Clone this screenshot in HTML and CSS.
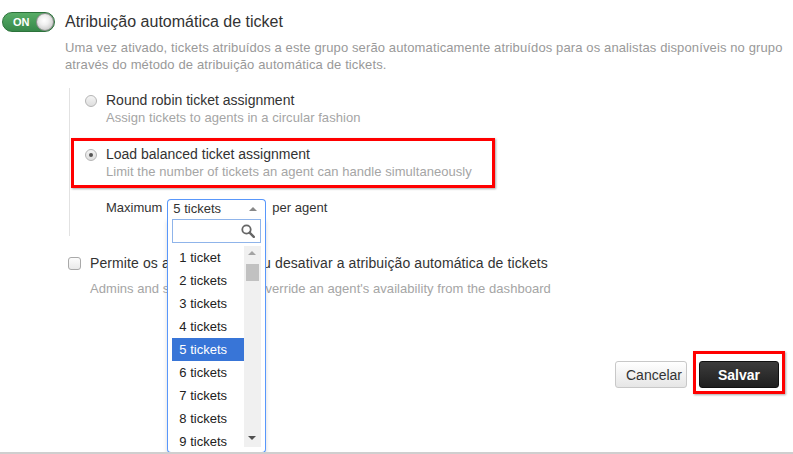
FILE: index.html
```html
<!DOCTYPE html>
<html lang="pt">
<head>
<meta charset="utf-8">
<title>Atribuição automática de ticket</title>
<link rel="stylesheet" href="styles.css">
</head>
<body>
<div class="page">
  <div class="header">
    <div class="toggle"><span class="toggle-text">ON</span><span class="knob"></span></div>
    <h1 class="title">Atribuição automática de ticket</h1>
  </div>
  <p class="desc">Uma vez ativado, tickets atribuídos a este grupo serão automaticamente atribuídos para os analistas disponíveis no grupo através do método de atribuição automática de tickets.</p>

  <div class="options">
    <div class="option">
      <span class="radio"></span>
      <div class="opt-text">
        <div class="opt-label">Round robin ticket assignment</div>
        <div class="opt-sub">Assign tickets to agents in a circular fashion</div>
      </div>
    </div>
    <div class="option option-marked">
      <span class="radio radio-on"></span>
      <div class="opt-text">
        <div class="opt-label">Load balanced ticket assignment</div>
        <div class="opt-sub">Limit the number of tickets an agent can handle simultaneously</div>
      </div>
    </div>
    <div class="max-row">
      <span class="max-label">Maximum</span>
      <div class="select">
        <span class="select-value">5 tickets</span>
        <span class="arrow-up"></span>
        <div class="drop">
          <div class="search">
            <svg class="search-icon" width="14" height="14" viewBox="0 0 14 14"><circle cx="5.5" cy="5.5" r="4.2" fill="none" stroke="#666" stroke-width="1.8"/><path d="M8.6 8.6 L12.8 12.8" stroke="#666" stroke-width="2.4" stroke-linecap="round"/></svg>
          </div>
          <div class="list">
            <ul class="items">
              <li class="item">1 ticket</li>
              <li class="item">2 tickets</li>
              <li class="item">3 tickets</li>
              <li class="item">4 tickets</li>
              <li class="item item-active">5 tickets</li>
              <li class="item">6 tickets</li>
              <li class="item">7 tickets</li>
              <li class="item">8 tickets</li>
              <li class="item">9 tickets</li>
            </ul>
            <div class="scrollbar">
              <span class="sb-up"></span>
              <span class="sb-thumb"></span>
              <span class="sb-down"></span>
            </div>
          </div>
        </div>
      </div>
      <span class="per">per agent</span>
    </div>
  </div>

  <div class="check-row">
    <span class="checkbox"></span>
    <div class="opt-text">
      <div class="check-label">Permite os agentes ativar ou desativar a atribuição automática de tickets</div>
      <div class="check-sub">Admins and supervisors can override an agent's availability from the dashboard</div>
    </div>
  </div>

  <div class="actions">
    <button class="btn btn-cancel">Cancelar</button>
    <button class="btn btn-save">Salvar</button>
  </div>
</div>
</body>
</html>
```
FILE: styles.css
```css
*, *::before, *::after { box-sizing: border-box; }
html, body { margin: 0; padding: 0; background: #fff; }
body { font-family: "Liberation Sans", Arial, sans-serif; color: #333; }

.page {
  height: 454px;
  border-bottom: 2px solid #cfcfcf;
  overflow: hidden;
}

.header {
  display: flex;
  align-items: center;
  padding: 12px 0 0 2px;
}
.toggle {
  position: relative;
  width: 53px;
  height: 20px;
  border-radius: 10px;
  background: linear-gradient(#58ad67, #37884a);
  border: 1px solid #2c733b;
  margin-right: 10px;
  flex: none;
}
.toggle-text {
  position: absolute;
  left: 10px;
  top: 2px;
  font-size: 11px;
  font-weight: bold;
  color: #fff;
  line-height: 14px;
}
.knob {
  position: absolute;
  right: 0;
  top: 0;
  width: 18px;
  height: 18px;
  border-radius: 50%;
  background: radial-gradient(circle at 45% 40%, #ffffff 0, #f0f0f0 35%, #b8b8b8 100%);
  border: 1px solid #8f8f8f;
}
.title {
  margin: 0;
  font-size: 16px;
  font-weight: normal;
  line-height: 20px;
  color: #333;
}

.desc {
  margin: 7px 0 0 65px;
  font-size: 13px;
  letter-spacing: 0.12px;
  line-height: 17px;
  color: #999;
}

.options {
  margin: 15px 0 0 69px;
  border-left: 1px solid #e2e2e2;
  padding: 4px 0 18px 15px;
}
.option {
  display: flex;
  align-items: flex-start;
  position: relative;
}
.option + .option { margin-top: 20px; }
.option-marked::after {
  content: "";
  position: absolute;
  left: -14px;
  top: -8px;
  width: 424px;
  height: 50px;
  border: 3px solid #f00;
  box-shadow: 1px 1px 2px rgba(0,0,0,0.35);
}
.radio {
  flex: none;
  width: 12px;
  height: 12px;
  border-radius: 50%;
  border: 1px solid #b5b5b5;
  background: linear-gradient(#f4f4f4, #dedede);
  margin: 3px 9px 0 0;
  position: relative;
}
.radio-on::after {
  content: "";
  position: absolute;
  left: 3px;
  top: 3px;
  width: 4px;
  height: 4px;
  border-radius: 50%;
  background: #555;
}
.opt-label, .check-label {
  font-size: 14px;
  line-height: 17px;
  color: #333;
}
.check-label { letter-spacing: 0.1px; }
.opt-sub {
  font-size: 13px;
  letter-spacing: 0.05px;
  line-height: 17px;
  color: #a5a5a5;
}

.max-row {
  display: flex;
  align-items: flex-start;
  margin-top: 19px;
  padding-left: 21px;
  font-size: 13px;
  line-height: 17px;
}
.max-label { margin-right: 5px; color: #333; }
.select {
  position: relative;
  width: 99px;
  height: 19px;
  border: 1px solid #5897fb;
  border-bottom: none;
  border-radius: 4px 4px 0 0;
  padding: 0 0 0 5px;
  margin-right: 6px;
  background: #fff;
  z-index: 2;
}
.select-value { color: #333; line-height: 17px; }
.arrow-up {
  position: absolute;
  right: 8px;
  top: 7px;
  width: 0;
  height: 0;
  border-left: 4px solid transparent;
  border-right: 4px solid transparent;
  border-bottom: 4px solid #888;
}
.drop {
  position: absolute;
  left: -1px;
  top: 18px;
  width: 99px;
  height: 235px;
  border: 1px solid #5897fb;
  border-top: none;
  border-radius: 0 0 4px 4px;
  background: #fff;
  padding: 1px 4px 4px 4px;
  box-shadow: 0 3px 4px rgba(0,0,0,0.15);
}
.search {
  position: relative;
  height: 24px;
  border: 1px solid #8fb4ea;
  background: #fff;
}
.search-icon {
  position: absolute;
  right: 5px;
  top: 4px;
}
.list {
  display: flex;
  margin-top: 3px;
  height: 204px;
  overflow: hidden;
}
.items {
  list-style: none;
  margin: 0;
  padding: 0;
  flex: 1;
}
.item {
  height: 23px;
  line-height: 23px;
  padding-left: 7px;
  font-size: 13px;
  color: #222;
}
.item-active {
  background: #3875d7;
  color: #fff;
}
.scrollbar {
  position: relative;
  flex: none;
  width: 17px;
  height: 201px;
  background: #f0f0f0;
}
.sb-up {
  position: absolute;
  left: 4px;
  top: 5px;
  border-left: 4px solid transparent;
  border-right: 4px solid transparent;
  border-bottom: 4px solid #a3a3a3;
}
.sb-down {
  position: absolute;
  left: 4px;
  bottom: 7px;
  border-left: 4px solid transparent;
  border-right: 4px solid transparent;
  border-top: 4px solid #505050;
}
.sb-thumb {
  position: absolute;
  left: 2px;
  top: 18px;
  width: 13px;
  height: 17px;
  background: #c1c1c1;
}
.per { color: #333; }

.check-row {
  display: flex;
  align-items: flex-start;
  margin: 19px 0 0 68px;
}
.checkbox {
  flex: none;
  width: 13px;
  height: 13px;
  border: 1px solid #a9a9a9;
  border-radius: 3px;
  background: linear-gradient(#fcfcfc, #e9e9e9);
  margin: 2px 9px 0 0;
}
.check-sub {
  font-size: 13px;
  letter-spacing: 0.05px;
  line-height: 17px;
  color: #a5a5a5;
  margin-top: 8px;
}

.actions {
  display: flex;
  justify-content: flex-end;
  gap: 12px;
  margin-top: 64px;
  padding-right: 14px;
}
.btn {
  font-family: "Liberation Sans", Arial, sans-serif;
  font-size: 14px;
  height: 27px;
  border-radius: 3px;
  padding: 0 10px;
  cursor: pointer;
}
.btn-cancel {
  width: 72px;
  background: linear-gradient(#ffffff, #e6e6e6);
  border: 1px solid #c8c8c8;
  color: #333;
}
.btn-save {
  position: relative;
  width: 80px;
  background: linear-gradient(#3c3c3c, #1f1f1f);
  border: 1px solid #111;
  color: #fff;
  font-weight: bold;
}
.btn-save::after {
  content: "";
  position: absolute;
  left: -7px;
  top: -11px;
  right: -7px;
  bottom: -7px;
  border: 3px solid #f00;
  box-shadow: 1px 1px 2px rgba(0,0,0,0.35);
}
```
